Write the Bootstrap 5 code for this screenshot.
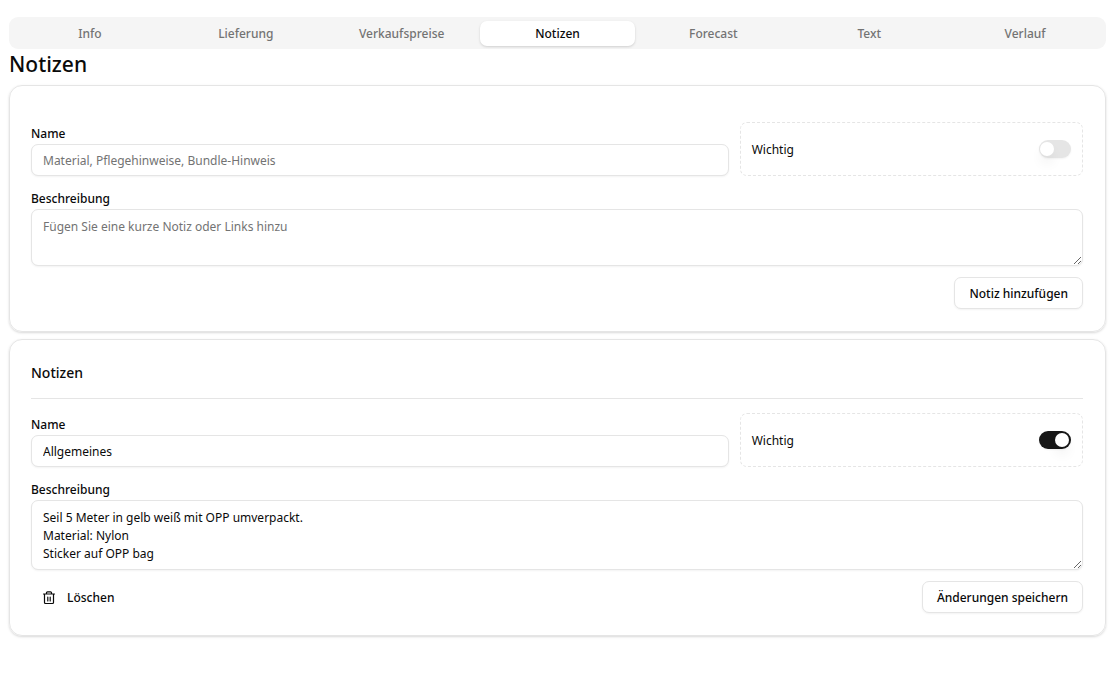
<!DOCTYPE html>
<html lang="de">
<head>
<meta charset="utf-8">
<meta name="viewport" content="width=device-width, initial-scale=1">
<title>Notizen</title>
<link href="https://cdn.jsdelivr.net/npm/bootstrap@5.3.0/dist/css/bootstrap.min.css" rel="stylesheet">
<style>
  :root { --line: #e5e5e5; --ink: #0a0a0a; --muted: #737373; }
  body { font-family: "Segoe UI", "Noto Sans", "Open Sans", sans-serif; font-size: 12px; line-height: 18px; color: var(--ink); background: #fff; }
  .page { padding: 17px 11px 17px 9px; }
  .tab-strip { background: #f5f5f5; border-radius: 9px; padding: 4px 3px 3px; height: 32px; }
  .tab-strip .nav-link { color: var(--muted); font-weight: 500; padding: 0; line-height: 25px; border-radius: 7px; }
  .tab-strip .nav-link.active { color: var(--ink); background: #fff; box-shadow: 0 1px 3px rgba(0,0,0,.1), 0 1px 2px rgba(0,0,0,.06); }
  .page-title { font-size: 21px; line-height: 30px; font-weight: 500; margin: 0 0 6px; }
  .note-card { border: 1px solid var(--line); border-radius: 13px; padding: 22px 22px 22px 21px; box-shadow: 0 1px 3px rgba(0,0,0,.1), 0 1px 2px rgba(0,0,0,.06); }
  .note-card.new-note { padding-top: 36px; margin-bottom: 7px; }
  .card-heading { font-size: 14px; font-weight: 500; line-height: 22px; padding-bottom: 14px; margin-bottom: 14px; border-bottom: 1px solid var(--line); }
  .note-fields { display: grid; grid-template-columns: repeat(3, minmax(0, 1fr)); column-gap: 11px; }
  .name-field { grid-column: span 2; }
  .stack { display: flex; flex-direction: column; gap: 11px; }
  .form-label { display: block; font-weight: 500; line-height: 20px; padding-top: 2px; margin: 0; }
  .form-control { font-size: 12px; line-height: 18px; color: var(--ink); border-color: var(--line); border-radius: 7px; padding: 7px 11px 5px; box-shadow: 0 1px 2px rgba(0,0,0,.05); }
  .form-control::placeholder { color: var(--muted); }
  textarea.form-control { display: block; padding: 8px 11px 6px; min-height: 57px; height: 57px; }
  textarea.form-control.tall { height: 70px; }
  .flag-box { border: 1px dashed var(--line); border-radius: 7px; padding: 0 11px; }
  .flag-box label { padding-top: 2px; }
  .form-check-input.toggle { width: 32px; height: 18px; margin: 0; float: none; border: 0; border-radius: 9px; box-shadow: 0 1px 2px rgba(0,0,0,.05);
    appearance: none; background: var(--line); display: flex; align-items: center; padding: 2px 1px; }
  .toggle::before { content: ""; width: 14px; height: 14px; border-radius: 50%; background: #fff; box-shadow: 0 8px 12px rgba(0,0,0,.05); }
  .form-check-input.toggle:checked { background: #171717; justify-content: flex-end; padding: 2px; }
  .btn-note { font-size: 12px; font-weight: 500; line-height: 18px; color: var(--ink); border: 1px solid var(--line); border-radius: 7px; padding: 7px 14px 5px; background: #fff; box-shadow: 0 1px 2px rgba(0,0,0,.05); }
  .btn-plain { display: flex; align-items: center; gap: 11px; border-color: transparent; box-shadow: none; background: transparent; padding: 7px 10px 5px; }
</style>
</head>
<body>
<main class="page">
  <nav class="tab-strip nav nav-pills nav-fill flex-nowrap" aria-label="Artikel">
    <a class="nav-link w-100" href="#info">Info</a>
    <a class="nav-link w-100" href="#lieferung">Lieferung</a>
    <a class="nav-link w-100" href="#verkaufspreise">Verkaufspreise</a>
    <a class="nav-link w-100 active" href="#notizen" aria-current="page">Notizen</a>
    <a class="nav-link w-100" href="#forecast">Forecast</a>
    <a class="nav-link w-100" href="#text">Text</a>
    <a class="nav-link w-100" href="#verlauf">Verlauf</a>
  </nav>

  <h1 class="page-title">Notizen</h1>

  <form class="note-card new-note stack">
    <div class="note-fields">
      <div class="name-field">
        <label class="form-label" for="newName">Name</label>
        <input class="form-control" id="newName" type="text" placeholder="Material, Pflegehinweise, Bundle-Hinweis">
      </div>
      <div class="flag-box d-flex align-items-center justify-content-between">
        <label for="newFlag">Wichtig</label>
        <input class="form-check-input toggle" id="newFlag" type="checkbox" role="switch">
      </div>
    </div>
    <div>
      <label class="form-label" for="newText">Beschreibung</label>
      <textarea class="form-control" id="newText" placeholder="Fügen Sie eine kurze Notiz oder Links hinzu"></textarea>
    </div>
    <div class="d-flex justify-content-end">
      <button class="btn btn-note" type="button">Notiz hinzufügen</button>
    </div>
  </form>

  <section class="note-card">
    <h2 class="card-heading">Notizen</h2>
    <form class="stack">
      <div class="note-fields">
        <div class="name-field">
          <label class="form-label" for="name1">Name</label>
          <input class="form-control" id="name1" type="text" value="Allgemeines">
        </div>
        <div class="flag-box d-flex align-items-center justify-content-between">
          <label for="flag1">Wichtig</label>
          <input class="form-check-input toggle" id="flag1" type="checkbox" role="switch" checked>
        </div>
      </div>
      <div>
        <label class="form-label" for="text1">Beschreibung</label>
        <textarea class="form-control tall" id="text1">Seil 5 Meter in gelb weiß mit OPP umverpackt.
Material: Nylon
Sticker auf OPP bag</textarea>
      </div>
      <div class="d-flex justify-content-between">
        <button class="btn btn-note btn-plain" type="button">
          <svg width="14" height="14" viewBox="0 0 14 14" fill="none" stroke="currentColor" stroke-width="1.2" stroke-linecap="round" stroke-linejoin="round" aria-hidden="true"><path d="M1.5 3h11M11.5 3v8.5a1 1 0 0 1-1 1h-7a1 1 0 0 1-1-1V3M4.5 3V1.8a1 1 0 0 1 1-1h3a1 1 0 0 1 1 1V3M5.8 6v4M8.2 6v4"/></svg>
          Löschen
        </button>
        <button class="btn btn-note" type="button">Änderungen speichern</button>
      </div>
    </form>
  </section>
</main>
<script src="https://cdn.jsdelivr.net/npm/bootstrap@5.3.0/dist/js/bootstrap.bundle.min.js"></script>
</body>
</html>
